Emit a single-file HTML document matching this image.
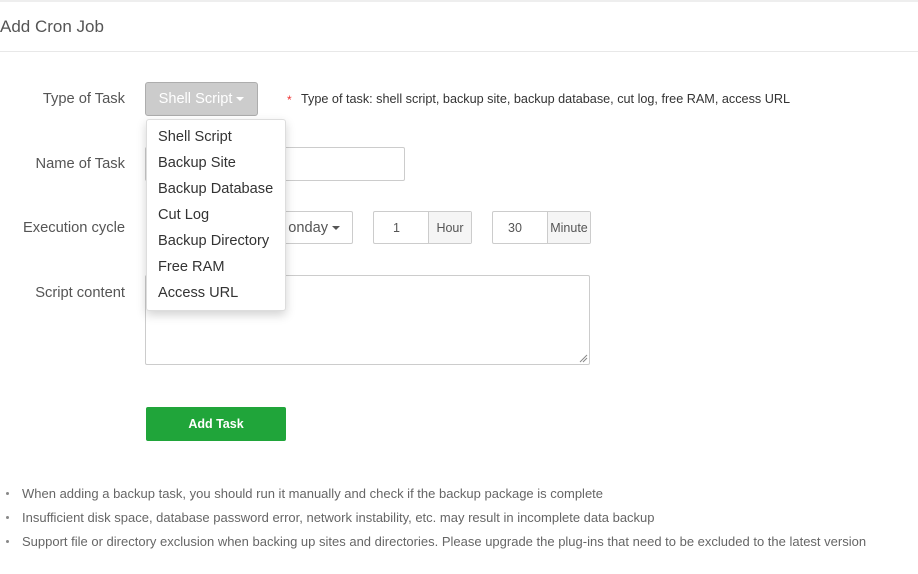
<!DOCTYPE html><html><head><style>
body{margin:0;width:918px;height:574px;background:#fff;font-family:"Liberation Sans",sans-serif;position:relative;overflow:hidden;color:#555}
.a{position:absolute}
.lbl{position:absolute;right:793px;font-size:14.7px;color:#555;white-space:nowrap}
.box{position:absolute;border:1px solid #ccc;border-radius:2px;box-sizing:border-box;background:#fff}
.add{position:absolute;background:#f5f5f5;border-left:1px solid #ccc;top:0;bottom:0;font-size:12.5px;color:#555;display:flex;align-items:center;justify-content:center}
.mi{position:absolute;left:11px;font-size:14.6px;color:#333}
.li{position:absolute;left:22px;font-size:13px;color:#666;white-space:nowrap}
.dot{position:absolute;left:6px;width:3px;height:3px;border-radius:2px;background:#888}
.caret{display:inline-block;border-left:4px solid transparent;border-right:4px solid transparent;border-top:4px solid;vertical-align:middle;margin-left:4px}
</style></head><body>
<div class="a" style="left:0;top:0;width:918px;height:2px;background:#eee"></div>
<div class="a" style="left:0;top:17px;font-size:17px;color:#555">Add Cron Job</div>
<div class="a" style="left:0;top:51px;width:918px;height:1px;background:#e8e8e8"></div>

<div class="lbl" style="top:91px">Type of Task</div>
<div class="lbl" style="top:156px">Name of Task</div>
<div class="lbl" style="top:220px">Execution cycle</div>
<div class="lbl" style="top:285px">Script content</div>

<div class="box" style="left:145px;top:82px;width:113px;height:34px;background:#ccc;border-color:#adadad;border-radius:3px;color:#fff;font-size:14.6px;text-align:center;line-height:33px">Shell Script<span class="caret"></span></div>
<div class="a" style="left:287px;top:93px;color:#e33;font-size:12px">*</div>
<div class="a" style="left:301px;top:92px;color:#333;font-size:12.65px;white-space:nowrap">Type of task: shell script, backup site, backup database, cut log, free RAM, access URL</div>

<div class="box" style="left:145px;top:147px;width:260px;height:34px"></div>
<div class="box" style="left:200px;top:211px;width:153px;height:33px;font-size:14.6px;line-height:32px;text-align:right;padding-right:12px;color:#555">onday<span class="caret"></span></div>
<div class="box" style="left:373px;top:211px;width:99px;height:33px;font-size:12.5px;line-height:32px;color:#555"><span style="position:absolute;left:19px">1</span><div class="add" style="left:54px;right:0">Hour</div></div>
<div class="box" style="left:492px;top:211px;width:99px;height:33px;font-size:12.5px;line-height:32px;color:#555"><span style="position:absolute;left:15px">30</span><div class="add" style="left:54px;right:0">Minute</div></div>
<div class="box" style="left:145px;top:275px;width:445px;height:90px"><svg class="a" style="right:1px;bottom:1px" width="9" height="9"><path d="M1 8L8 1M4 8L8 4" stroke="#888" stroke-width="1"/></svg></div>

<div class="a" style="left:146px;top:119px;width:140px;height:192px;background:#fff;border:1px solid #ddd;border-radius:3px;box-shadow:0 4px 10px rgba(0,0,0,.18);box-sizing:border-box">
<div class="mi" style="top:9px">Shell Script</div>
<div class="mi" style="top:35px">Backup Site</div>
<div class="mi" style="top:61px">Backup Database</div>
<div class="mi" style="top:87px">Cut Log</div>
<div class="mi" style="top:113px">Backup Directory</div>
<div class="mi" style="top:139px">Free RAM</div>
<div class="mi" style="top:165px">Access URL</div>
</div>

<div class="a" style="left:146px;top:407px;width:140px;height:34px;background:#20a53a;border-radius:2px;color:#fff;font-size:12.5px;font-weight:bold;text-align:center;line-height:34px">Add Task</div>

<div class="dot" style="top:492px"></div><div class="li" style="top:486px">When adding a backup task, you should run it manually and check if the backup package is complete</div>
<div class="dot" style="top:516px"></div><div class="li" style="top:510px">Insufficient disk space, database password error, network instability, etc. may result in incomplete data backup</div>
<div class="dot" style="top:540px"></div><div class="li" style="top:534px">Support file or directory exclusion when backing up sites and directories. Please upgrade the plug-ins that need to be excluded to the latest version</div>
</body></html>
